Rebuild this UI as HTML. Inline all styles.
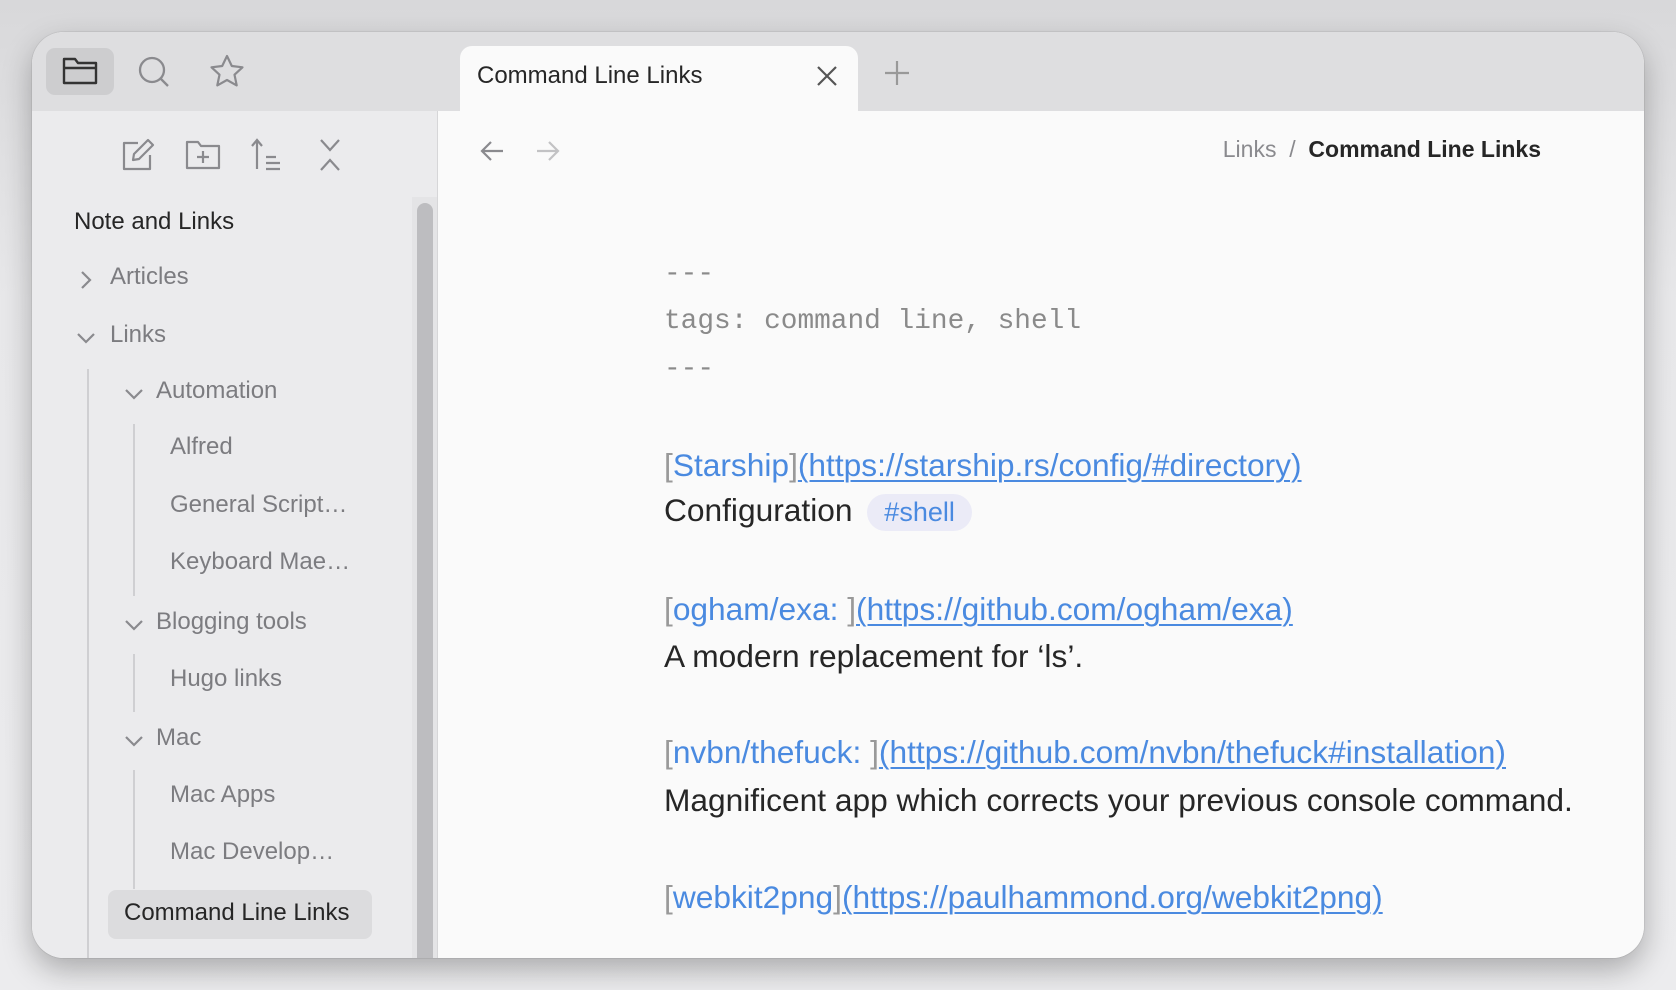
<!DOCTYPE html>
<html><head><meta charset="utf-8"><style>
*{margin:0;padding:0;box-sizing:border-box}
body{width:1676px;height:990px;background:linear-gradient(#d8d8da,#e8e8ea 30%,#ececee);font-family:"Liberation Sans",sans-serif;position:relative;overflow:hidden}
.win{position:absolute;left:32px;top:32px;width:1612px;height:926px;border-radius:32px;overflow:hidden;background:#fafafa;box-shadow:0 12px 30px rgba(0,0,0,.28),0 0 0 1px rgba(0,0,0,.06)}
.tabbar{position:absolute;left:0;top:0;width:100%;height:79px;background:#dedee0}
.a{position:absolute}
.side{position:absolute;left:0;top:79px;width:406px;height:847px;background:#ebebed;border-right:1px solid #d6d6d8;overflow:hidden}
.tree{position:absolute;left:0;top:-30px;width:406px;height:900px}
.t{position:absolute;font-size:24px;color:#7c7c80;white-space:nowrap}
.g{position:absolute;width:1.5px;background:#cfcfd2}
.main{position:absolute;left:407px;top:79px;right:0;bottom:0;background:#fafafa}
.c{position:absolute;left:225px;white-space:nowrap;font-size:31.7px;color:#262626}
.mono{font-family:"Liberation Mono",monospace;font-size:27.8px;color:#8a8a8a}
.l{color:#4a8ae0}.u{text-decoration:underline;text-decoration-thickness:2px;text-underline-offset:4px}
.b{color:#999}
</style></head><body>
<div class="win">
<div class="tabbar"></div>
<div class="a" style="left:14px;top:16px;width:68px;height:47px;border-radius:9px;background:#cdcdcf"></div>
<svg class="a" style="left:28px;top:22px" width="40" height="34" viewBox="0 0 40 34" fill="none" stroke="#333" stroke-width="2.4" stroke-linejoin="round"><path d="M4 5h11l3 4h18v20H4z"/><path d="M4 14h32"/></svg>
<svg class="a" style="left:104px;top:22px" width="36" height="36" fill="none" stroke="#8a8a8e" stroke-width="2.3"><circle cx="16" cy="16" r="12"/><path d="M25 25l7 7"/></svg>
<svg class="a" style="left:176px;top:21px" width="38" height="36" fill="none" stroke="#8a8a8e" stroke-width="2.2" stroke-linejoin="round"><path d="M19 3l4.8 10 10.7 1.3-8 7.4 2.2 10.7L19 27l-9.7 5.4 2.2-10.7-8-7.4L14.2 13z"/></svg>
<div class="a" style="left:428px;top:14px;width:398px;height:70px;background:#fafafa;border-radius:12px 12px 0 0"></div>
<div class="a" style="left:445px;top:30px;font-size:24px;color:#262626">Command Line Links</div>
<svg class="a" style="left:784px;top:33px" width="22" height="22" stroke="#555" stroke-width="2.2"><path d="M2 2l18 18M20 2L2 20"/></svg>
<svg class="a" style="left:852px;top:28px" width="26" height="26" stroke="#999" stroke-width="2.2"><path d="M13 1v24M1 13h24"/></svg>
<div class="side">
<svg class="a" style="left:88px;top:26px" width="36" height="36" fill="none" stroke="#8a8a8e" stroke-width="2.2" stroke-linejoin="round"><path d="M18 6H4v26h26V18"/><path d="M28 3l5 5-14 14-6 1 1-6z"/></svg>
<svg class="a" style="left:152px;top:28px" width="38" height="32" fill="none" stroke="#8a8a8e" stroke-width="2.2" stroke-linejoin="round"><path d="M3 3h11l3 4h18v22H3z"/><path d="M19 12v12M13 18h12"/></svg>
<svg class="a" style="left:218px;top:26px" width="34" height="36" fill="none" stroke="#8a8a8e" stroke-width="2.2"><path d="M7 4v28M2 9l5-6 5 6M16 20h10M16 26h14M16 32h14"/></svg>
<svg class="a" style="left:286px;top:26px" width="24" height="36" fill="none" stroke="#8a8a8e" stroke-width="2.2"><path d="M3 3l9 10 9-10M3 33l9-10 9 10"/></svg>
<div class="tree">
<div class="a" style="left:380px;top:116px;width:26px;height:800px;background:#e4e4e6"></div>
<div class="a" style="left:385px;top:122px;width:16px;height:800px;border-radius:8px;background:#bdbdc0"></div>
<div class="t" style="left:42px;top:127px;color:#262626">Note and Links</div>
<svg class="a" style="left:47px;top:189px" width="14" height="20" fill="none" stroke="#8a8a8e" stroke-width="2.2"><path d="M3 2l8 8-8 8"/></svg>
<div class="t" style="left:78px;top:182px">Articles</div>
<svg class="a" style="left:44px;top:250px" width="20" height="14" fill="none" stroke="#8a8a8e" stroke-width="2.2"><path d="M2 3l8 8 8-8"/></svg>
<div class="t" style="left:78px;top:240px">Links</div>
<div class="g" style="left:55px;top:288px;height:600px"></div>
<svg class="a" style="left:92px;top:306px" width="20" height="14" fill="none" stroke="#8a8a8e" stroke-width="2.2"><path d="M2 3l8 8 8-8"/></svg>
<div class="t" style="left:124px;top:296px">Automation</div>
<div class="g" style="left:101px;top:343px;height:172px"></div>
<div class="t" style="left:138px;top:352px">Alfred</div>
<div class="t" style="left:138px;top:410px">General Script…</div>
<div class="t" style="left:138px;top:467px">Keyboard Mae…</div>
<svg class="a" style="left:92px;top:537px" width="20" height="14" fill="none" stroke="#8a8a8e" stroke-width="2.2"><path d="M2 3l8 8 8-8"/></svg>
<div class="t" style="left:124px;top:527px">Blogging tools</div>
<div class="g" style="left:101px;top:573px;height:58px"></div>
<div class="t" style="left:138px;top:584px">Hugo links</div>
<svg class="a" style="left:92px;top:653px" width="20" height="14" fill="none" stroke="#8a8a8e" stroke-width="2.2"><path d="M2 3l8 8 8-8"/></svg>
<div class="t" style="left:124px;top:643px">Mac</div>
<div class="g" style="left:101px;top:689px;height:119px"></div>
<div class="t" style="left:138px;top:700px">Mac Apps</div>
<div class="t" style="left:138px;top:757px">Mac Develop…</div>
<div class="a" style="left:76px;top:809px;width:264px;height:49px;border-radius:8px;background:#dcdcde"></div>
<div class="t" style="left:92px;top:818px;color:#262626">Command Line Links</div>
</div>
</div>
<div class="main">
<svg class="a" style="left:40px;top:28px" width="26" height="24" fill="none" stroke="#8a8a8e" stroke-width="2.2"><path d="M24 12H3M12 3l-9 9 9 9"/></svg>
<svg class="a" style="left:96px;top:28px" width="26" height="24" fill="none" stroke="#c2c2c4" stroke-width="2.2"><path d="M2 12h21M14 3l9 9-9 9"/></svg>
<div class="a" style="right:103px;top:25px;font-size:23px;color:#8a8a8e;white-space:nowrap">Links&nbsp; /&nbsp; <span style="color:#262626;font-weight:bold">Command Line Links</span></div>
<div class="c mono" style="top:148px">---</div>
<div class="c mono" style="top:195px">tags: command line, shell</div>
<div class="c mono" style="top:243px">---</div>
<div class="c" style="top:336px"><span class="b">[</span><span class="l">Starship</span><span class="b">]</span><span class="l u">(https://starship.rs/config/#directory)</span></div>
<div class="c" style="top:381px">Configuration <span style="display:inline-block;background:#ebebf7;color:#4a8ae0;border-radius:21px;padding:3px 17px;font-size:27px;margin-left:6px">#shell</span></div>
<div class="c" style="top:480px"><span class="b">[</span><span class="l">ogham/exa: </span><span class="b">]</span><span class="l u">(https://github.com/ogham/exa)</span></div>
<div class="c" style="top:527px">A modern replacement for ‘ls’.</div>
<div class="c" style="top:623px"><span class="b">[</span><span class="l">nvbn/thefuck: </span><span class="b">]</span><span class="l u">(https://github.com/nvbn/thefuck#installation)</span></div>
<div class="c" style="top:671px">Magnificent app which corrects your previous console command.</div>
<div class="c" style="top:768px"><span class="b">[</span><span class="l">webkit2png</span><span class="b">]</span><span class="l u">(https://paulhammond.org/webkit2png)</span></div>
</div>
</div>
</body></html>
